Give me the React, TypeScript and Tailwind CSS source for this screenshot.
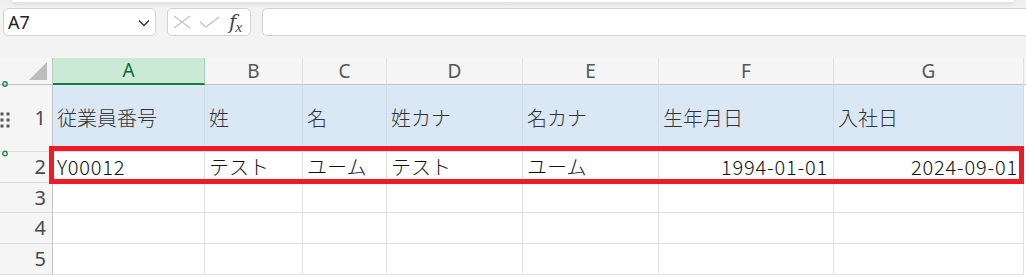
import React from "react";

const cols = [
  { l: "A", w: "w-[152px]" },
  { l: "B", w: "w-[98px]" },
  { l: "C", w: "w-[84px]" },
  { l: "D", w: "w-[136px]" },
  { l: "E", w: "w-[136px]" },
  { l: "F", w: "w-[175px]" },
  { l: "G", w: "w-[190px]" },
];

const row1 = ["従業員番号", "姓", "名", "姓カナ", "名カナ", "生年月日", "入社日"];
const row2: { t: string; r?: boolean; latin?: boolean }[] = [
  { t: "Y00012", latin: true },
  { t: "テスト" },
  { t: "ユーム" },
  { t: "テスト" },
  { t: "ユーム" },
  { t: "1994-01-01", r: true, latin: true },
  { t: "2024-09-01", r: true, latin: true },
];

const cellFont = { fontFamily: '"Noto Sans CJK JP", "Noto Sans", sans-serif' };
const uiFont = { fontFamily: '"Noto Sans", "Liberation Sans", sans-serif' };

function RowHead({ n, h }: { n: number; h: string }) {
  return (
    <div
      className={`w-[53px] ${h} shrink-0 border-r border-b border-r-[#c4c4c4] border-b-[#dcdcdc] bg-[#f5f5f5] flex items-center justify-end pr-[6px] text-[20px] text-[#4a4a4a]`}
      style={uiFont}
    >
      {n}
    </div>
  );
}

export default function App() {
  return (
    <div className="relative w-[1026px] h-[275px] overflow-hidden bg-[#f3f3f3]">
      {/* top ribbon edge */}
      <div className="h-[8px] bg-gradient-to-b from-[#ececec] to-[#f3f3f3] px-[12px]">
        <div className="h-[2px] bg-white rounded-b-[4px] shadow-[0_2px_4px_rgba(0,0,0,0.15)]" />
      </div>
      {/* toolbar */}
      <div className="flex h-[28px] items-stretch">
        <div className="ml-[3px] w-[153px] bg-white border border-[#d2d2d2] rounded-[5px] flex items-center justify-between pl-[4px] pr-[5px]">
          <span className="text-[18px] text-[#222] leading-none" style={uiFont}>A7</span>
          <svg width="12" height="8" viewBox="0 0 12 8" className="mt-[1px]">
            <path d="M1 1.5 L6 6.5 L11 1.5" fill="none" stroke="#333" strokeWidth="1.4" />
          </svg>
        </div>
        <div className="ml-[11px] w-[84px] bg-white border border-[#d2d2d2] rounded-[5px] flex items-center pl-[5px]">
          <svg width="18" height="14" viewBox="0 0 18 14">
            <path d="M1 1 L17 13 M17 1 L1 13" stroke="#c4c4c4" strokeWidth="1.4" fill="none" />
          </svg>
          <svg width="21" height="12" viewBox="0 0 21 12" className="ml-[8px]">
            <path d="M1 6 L7 11 L20 1" stroke="#c4c4c4" strokeWidth="1.4" fill="none" />
          </svg>
          <span
            className="ml-[9px] text-[#444] italic leading-none flex items-end"
            style={{ fontFamily: '"DejaVu Serif", "Liberation Serif", serif' }}
          >
            <span className="text-[20px]">f</span>
            <span className="text-[15px] -ml-[1px] translate-y-[3px]" style={{ fontFamily: '"Liberation Serif", serif' }}>x</span>
          </span>
        </div>
        <div className="ml-[11px] flex-1 bg-white border border-r-0 border-[#d2d2d2] rounded-l-[5px]" />
      </div>
      <div className="h-[22px]" />
      {/* column headers */}
      <div className="flex h-[27px]">
        <div className="w-[53px] shrink-0 border-r border-b border-r-[#c4c4c4] border-b-[#c4c4c4] bg-[#f5f5f5] flex items-end justify-end pr-[5px] pb-[4px]">
          <svg width="18" height="18" viewBox="0 0 18 18">
            <path d="M18 0 L18 18 L0 18 Z" fill="#bdbdbd" />
          </svg>
        </div>
        {cols.map((c, i) =>
          i === 0 ? (
            <div
              key={c.l}
              className={`${c.w} shrink-0 bg-[#caead6] border-r border-r-[#9fd8b5] border-b-2 border-b-[#107c41] flex items-center justify-center text-[19px] text-[#0e6b36]`}
              style={uiFont}
            >
              {c.l}
            </div>
          ) : (
            <div
              key={c.l}
              className={`${c.w} shrink-0 bg-[#f5f5f5] border-r border-r-[#e0e0e0] border-b border-b-[#c4c4c4] flex items-center justify-center text-[19px] text-[#555]`}
              style={uiFont}
            >
              {c.l}
            </div>
          )
        )}
        <div className="flex-1 bg-[#f5f5f5] border-b border-b-[#c4c4c4]" />
      </div>
      {/* row 1 */}
      <div className="flex h-[67px]">
        <RowHead n={1} h="h-[67px]" />
        {cols.map((c, i) => (
          <div
            key={c.l}
            className={`${c.w} shrink-0 bg-[#dae8f6] border-r border-b border-[#d0dcea] flex items-center pl-[4px] text-[20px] font-light text-[#333] whitespace-nowrap overflow-hidden`}
            style={cellFont}
          >
            {row1[i]}
          </div>
        ))}
        <div className="flex-1 bg-white" />
      </div>
      {/* row 2 */}
      <div className="flex h-[31px]">
        <RowHead n={2} h="h-[31px]" />
        {cols.map((c, i) => (
          <div
            key={c.l}
            className={`${c.w} shrink-0 bg-white border-r border-b border-[#e1e1e1] flex items-center ${row2[i].r ? "justify-end pr-[5px]" : "pl-[4px]"} ${row2[i].latin ? "tracking-[0.8px]" : ""} text-[20px] font-light text-[#111] whitespace-nowrap overflow-hidden`}
            style={cellFont}
          >
            {row2[i].t}
          </div>
        ))}
        <div className="flex-1 bg-white" />
      </div>
      {[3, 4, 5].map((n) => (
        <div key={n} className={`flex ${n === 3 ? "h-[30px]" : "h-[31px]"}`}>
          <RowHead n={n} h={n === 3 ? "h-[30px]" : "h-[31px]"} />
          {cols.map((c) => (
            <div key={c.l} className={`${c.w} shrink-0 bg-white border-r border-b border-[#e1e1e1]`} />
          ))}
          <div className="flex-1 bg-white" />
        </div>
      ))}

      {/* outline markers */}
      <svg className="absolute left-[1px] top-[81px]" width="8" height="8" viewBox="0 0 8 8">
        <circle cx="4" cy="3" r="2.2" fill="none" stroke="#1e8a4c" strokeWidth="1.4" />
      </svg>
      <svg className="absolute left-[1px] top-[150px]" width="8" height="8" viewBox="0 0 8 8">
        <circle cx="4" cy="3.5" r="2.2" fill="none" stroke="#1e8a4c" strokeWidth="1.4" />
      </svg>
      <svg className="absolute left-[0px] top-[112px]" width="11" height="16" viewBox="0 0 11 16">
        {[0, 6, 12].map((y) =>
          [0, 6].map((x) => <rect key={`${x}-${y}`} x={x + 0.5} y={y + 0.5} width="3" height="3" fill="#555" />)
        )}
      </svg>

      {/* red highlight */}
      <div className="absolute left-[49px] top-[146px] w-[975px] h-[38px] border-[5px] border-[#ed1c24]" />
    </div>
  );
}
